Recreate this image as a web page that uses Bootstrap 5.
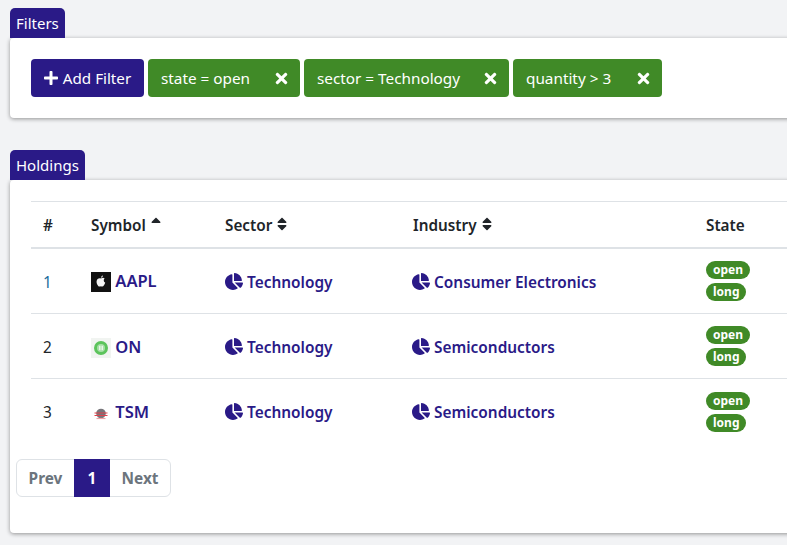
<!DOCTYPE html>
<html lang="en">
<head>
  <meta charset="UTF-8">
  <meta name="viewport" content="width=device-width, initial-scale=1">
  <title>Holdings</title>
  <link href="https://cdn.jsdelivr.net/npm/bootstrap@5.3.2/dist/css/bootstrap.min.css" rel="stylesheet">
  <script src="https://cdn.jsdelivr.net/npm/bootstrap@5.3.2/dist/js/bootstrap.bundle.min.js"></script>
  <style>
    html, body { overflow: hidden; height: 545px; }
    body { background: #f2f3f5; font-family: "Noto Sans", "Open Sans", sans-serif; font-size: 15.4px; color: #212529; padding: 8px 0 0 10px; }
    .page-wrap { width: 1100px; }
    .tab-label { display: inline-block; height: 30px; line-height: 30px; padding: 0 6px; background: #2a1a87; color: #fff; border-radius: 5px 5px 0 0; vertical-align: top; font-size: 15px; }
    .panel-box { background: #fff; border-radius: 4px; box-shadow: 0 1px 4px rgba(0,0,0,.4); }
    .filters-box { height: 80px; padding: 21px; margin-bottom: 32px; }
    .holdings-box { height: 353px; padding: 21px 0 0 0; }
    .tool-btn { height: 38px; border-radius: 4px; color: #fff; border: 0; padding: 0; }
    .add-btn { width: 113px; background: #2a1a87; font-size: 15.2px; }
    .chip-btn { background: #408a27; padding: 0 12px 0 13px; justify-content: space-between; font-size: 15.3px; }
    .chip-btn span { padding-top: 1px; }
    .chip-a { width: 152px; }
    .chip-b { width: 205px; }
    .chip-c { width: 149px; }
    .ico-plus { width: 14px; height: 16px; fill: #fff; margin-right: 5px; }
    .ico-x { width: 13px; height: 17px; fill: #fff; }
    .hold-table { width: 1000px; margin: 0 0 0 21px; table-layout: fixed; }
    .hold-table th, .hold-table td { padding: 0 12px; vertical-align: middle; }
    .hold-table thead tr { height: 46px; }
    .hold-table thead th { border-top: 1px solid #dee2e6; border-bottom: 2px solid #dee2e6; font-weight: 600; padding-top: 2px; font-size: 15.3px; }
    .hold-table tbody tr { height: 65px; }
    .hold-table tbody tr:first-child { height: 66px; }
    .hold-table tbody tr:last-child td { border-bottom: 0; }
    .hold-table tbody tr:last-child .tag-cell { padding-top: 2px; }
    .hold-table .link-cell { padding-top: 4px; }
    .hold-table tbody tr:last-child .link-cell { padding-top: 2px; }
    .hold-table .sym-cell { padding-top: 2px; }
    .col-num { width: 48px; }
    .col-sym { width: 134px; }
    .col-sec { width: 188px; }
    .col-ind { width: 293px; }
    .row-link { color: #2a1a87; font-weight: 600; text-decoration: none; }
    .sym-link { font-size: 16.5px; }
    .num-link { color: #1a6b9c; text-decoration: none; }
    .ico-pie { width: 18px; height: 17px; fill: #2a1a87; margin-right: 4px; vertical-align: -2px; }
    .ind-cell .ico-pie { margin-left: -1px; }
    .ico-sort { width: 10px; height: 16px; fill: #212529; margin-left: 1px; vertical-align: -1px; }
    .logo-pic { width: 20px; height: 20px; vertical-align: -5px; }
    .pill-tag { display: block; width: fit-content; background: #408a27; color: #fff; border-radius: 10px; font-size: 12px; font-weight: 700; line-height: 18px; padding: 0 7px; margin-bottom: 4px; }
    .pill-tag:last-child { margin-bottom: 0; }
    .pager-row { margin: 15px 0 0 6px; }
    .pager-row .page-link { height: 38px; line-height: 38px; padding: 0; text-align: center; font-weight: 700; color: #6c757d; border-color: #dee2e6; font-size: 15.4px; }
    .pager-row .active .page-link { background: #2a1a87; border-color: #2a1a87; color: #fff; }
    .pg-prev { width: 59px; }
    .pg-one { width: 36px; }
    .pg-next { width: 62px; }
  </style>
</head>
<body>
  <!-- icon sprite -->
  <svg class="d-none">
    <symbol id="i-x" viewBox="0 0 352 512"><path d="M242.72 256l100.07-100.07c12.28-12.28 12.28-32.19 0-44.48l-22.24-22.24c-12.28-12.28-32.19-12.28-44.48 0L176 189.28 75.93 89.21c-12.28-12.28-32.19-12.28-44.48 0L9.21 111.45c-12.28 12.28-12.28 32.19 0 44.48L109.28 256 9.21 356.07c-12.28 12.28-12.28 32.19 0 44.48l22.24 22.24c12.28 12.28 32.2 12.28 44.48 0L176 322.72l100.07 100.07c12.28 12.28 32.2 12.28 44.48 0l22.24-22.24c12.28-12.28 12.28-32.19 0-44.48L242.72 256z"/></symbol>
    <symbol id="i-pie" viewBox="0 0 544 512"><path d="M527.79 288H290.5l158.03 158.03c6.04 6.04 15.98 6.53 22.19.68 38.7-36.46 65.32-85.61 73.13-140.86 1.34-9.46-6.51-17.85-16.06-17.85zm-15.83-64.8C503.72 103.74 408.26 8.28 288.8.04 279.68-.59 272 7.1 272 16.24V240h223.77c9.14 0 16.82-7.68 16.19-16.8zM224 288V50.71c0-9.55-8.39-17.4-17.84-16.06C86.99 51.49-4.1 155.6.14 280.37 4.5 408.51 114.83 513.59 243.03 511.98c50.4-.63 96.97-16.87 135.26-44.03 7.9-5.6 8.42-17.23 1.57-24.08L224 288z"/></symbol>
    <symbol id="i-sort" viewBox="0 0 320 512"><path d="M41 288h238c21.4 0 32.1 25.9 17 41L177 448c-9.4 9.4-24.6 9.4-33.9 0L24 329c-15.1-15.1-4.4-41 17-41zm255-105L177 64c-9.4-9.4-24.6-9.4-33.9 0L24 183c-15.1 15.1-4.4 41 17 41h238c21.4 0 32.1-25.9 17-41z"/></symbol>
  </svg>

  <div class="page-wrap">
    <!-- Filters -->
    <span class="tab-label">Filters</span>
    <div class="panel-box filters-box d-flex gap-1">
      <button type="button" class="tool-btn add-btn d-flex align-items-center justify-content-center">
        <svg class="ico-plus" viewBox="0 0 448 512"><path d="M416 208H272V64c0-17.67-14.33-32-32-32h-32c-17.67 0-32 14.33-32 32v144H32c-17.67 0-32 14.33-32 32v32c0 17.67 14.33 32 32 32h144v144c0 17.67 14.33 32 32 32h32c17.67 0 32-14.33 32-32V304h144c17.67 0 32-14.33 32-32v-32c0-17.67-14.33-32-32-32z"/></svg>Add Filter
      </button>
      <div class="tool-btn chip-btn chip-a d-flex align-items-center"><span>state = open</span><svg class="ico-x"><use href="#i-x"/></svg></div>
      <div class="tool-btn chip-btn chip-b d-flex align-items-center"><span>sector = Technology</span><svg class="ico-x"><use href="#i-x"/></svg></div>
      <div class="tool-btn chip-btn chip-c d-flex align-items-center"><span>quantity &gt; 3</span><svg class="ico-x"><use href="#i-x"/></svg></div>
    </div>

    <!-- Holdings -->
    <span class="tab-label">Holdings</span>
    <div class="panel-box holdings-box">
      <table class="table hold-table mb-0">
        <thead>
          <tr>
            <th class="col-num">#</th>
            <th class="col-sym">Symbol <svg class="ico-sort" viewBox="0 0 320 512"><path d="M296 183L177 64c-9.4-9.4-24.6-9.4-33.9 0L24 183c-15.1 15.1-4.4 41 17 41h238c21.4 0 32.1-25.9 17-41z"/></svg></th>
            <th class="col-sec">Sector <svg class="ico-sort"><use href="#i-sort"/></svg></th>
            <th class="col-ind">Industry <svg class="ico-sort"><use href="#i-sort"/></svg></th>
            <th>State</th>
          </tr>
        </thead>
        <tbody>
          <tr>
            <td class="link-cell"><a class="num-link" href="#">1</a></td>
            <td class="sym-cell"><a class="row-link sym-link" href="#"><svg class="logo-pic" viewBox="0 0 20 20"><rect width="20" height="20" fill="#111"/><path d="M10 6.600c1-.9 2.600-1 3.600-.2-1.400 1.300-1 3.500.6 4.200-.5 1.800-1.700 4-3 4-.5 0-.9-.3-1.300-.3s-.8.3-1.300.3c-1.500 0-3.300-3.100-3-5.400.2-2.300 2.600-3.700 4.400-2.600zM10 5.800c0-1.200.9-2.100 2-2.300 0 1.200-.9 2.200-2 2.300z" fill="#f4f4f4"/></svg> AAPL</a></td>
            <td class="link-cell"><a class="row-link" href="#"><svg class="ico-pie"><use href="#i-pie"/></svg>Technology</a></td>
            <td class="link-cell ind-cell"><a class="row-link" href="#"><svg class="ico-pie"><use href="#i-pie"/></svg>Consumer Electronics</a></td>
            <td class="tag-cell"><span class="pill-tag">open</span><span class="pill-tag">long</span></td>
          </tr>
          <tr>
            <td class="link-cell">2</td>
            <td class="sym-cell"><a class="row-link sym-link" href="#"><svg class="logo-pic" viewBox="0 0 20 20"><rect width="20" height="20" fill="#f1f4f1"/><circle cx="10" cy="10" r="5.500" fill="#a8e0a8" stroke="#5cc45c" stroke-width="3"/><rect x="8" y="7.800" width="1.500" height="4.400" fill="#e8f6e8"/><rect x="10.500" y="7.800" width="1.500" height="4.400" fill="#e8f6e8"/></svg> ON</a></td>
            <td class="link-cell"><a class="row-link" href="#"><svg class="ico-pie"><use href="#i-pie"/></svg>Technology</a></td>
            <td class="link-cell ind-cell"><a class="row-link" href="#"><svg class="ico-pie"><use href="#i-pie"/></svg>Semiconductors</a></td>
            <td class="tag-cell"><span class="pill-tag">open</span><span class="pill-tag">long</span></td>
          </tr>
          <tr>
            <td class="link-cell">3</td>
            <td class="sym-cell"><a class="row-link sym-link" href="#"><svg class="logo-pic" viewBox="0 0 20 20"><circle cx="10" cy="10.500" r="4.800" fill="#77757a"/><path d="M3.500 10h13M3.500 12.500h13" stroke="#e0404a" stroke-width="1.200" fill="none"/><path d="M5.500 15.500h9" stroke="#f0a0a4" stroke-width="1.200"/></svg> TSM</a></td>
            <td class="link-cell"><a class="row-link" href="#"><svg class="ico-pie"><use href="#i-pie"/></svg>Technology</a></td>
            <td class="link-cell ind-cell"><a class="row-link" href="#"><svg class="ico-pie"><use href="#i-pie"/></svg>Semiconductors</a></td>
            <td class="tag-cell"><span class="pill-tag">open</span><span class="pill-tag">long</span></td>
          </tr>
        </tbody>
      </table>
      <ul class="pagination pager-row">
        <li class="page-item"><a class="page-link pg-prev" href="#">Prev</a></li>
        <li class="page-item active"><a class="page-link pg-one" href="#">1</a></li>
        <li class="page-item"><a class="page-link pg-next" href="#">Next</a></li>
      </ul>
    </div>
  </div>
</body>
</html>
